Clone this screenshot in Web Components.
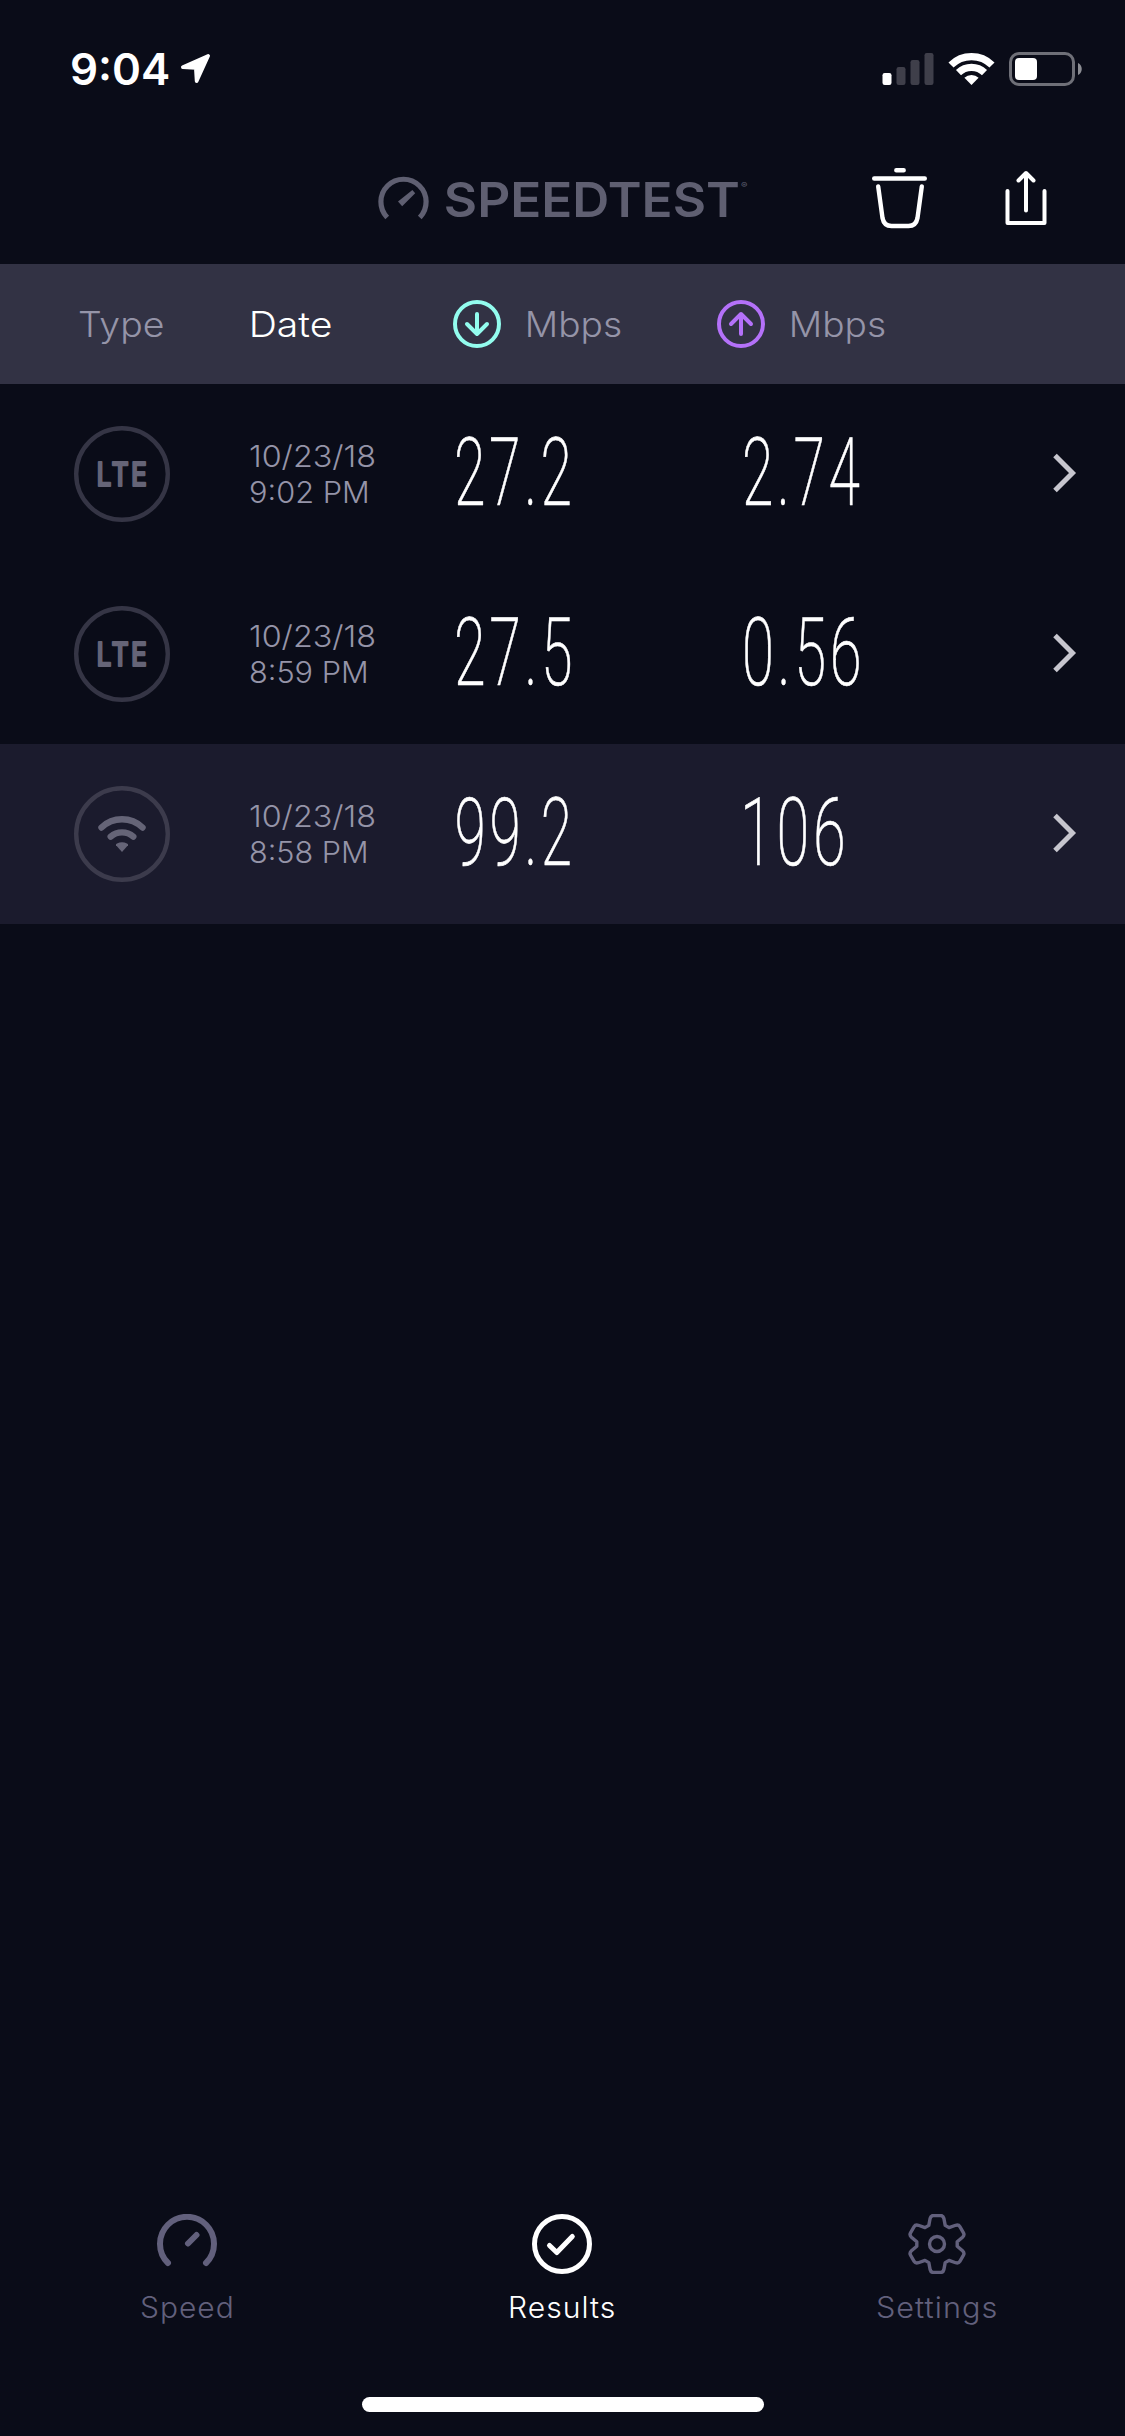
<!DOCTYPE html>
<html lang="en">
<head>
<meta charset="utf-8">
<title>Speedtest Results</title>
<style>
    html, body {
        margin: 0;
        background: #0a0c18;
    }
</style>
</head>
<body>
<results-app></results-app>

<script>
const define = (name, markup, setup) => {
    const template = document.createElement('template');
    template.innerHTML = markup;

    customElements.define(name, class extends HTMLElement {
        constructor() {
            super();
            this.attachShadow({mode: 'open'}).appendChild(template.content.cloneNode(true));
        }

        connectedCallback() {
            if (setup) setup(this, this.shadowRoot);
        }
    });
};

const ctx = document.createElement('canvas').getContext('2d');

// A single line of text whose visible ink is exactly `width` px wide.
// The box is `width` wide, so neighbours can be laid out against the ink.
define('fit-text', `
    <style>
        :host { display: block; flex: none; white-space: nowrap; }
        span { display: inline-block; transform-origin: 0 50%; }
    </style>
    <span><slot></slot></span>
`, (host, root) => {
    const width = Number(host.getAttribute('width'));
    const style = getComputedStyle(host);
    ctx.font = `${style.fontWeight} ${style.fontSize} ${style.fontFamily}`;
    ctx.letterSpacing = style.letterSpacing === 'normal' ? '0px' : style.letterSpacing;
    const ink = ctx.measureText(host.textContent);
    const scale = width / (ink.actualBoundingBoxLeft + ink.actualBoundingBoxRight);
    host.style.width = width + 'px';
    root.querySelector('span').style.transform =
        `translateX(${ink.actualBoundingBoxLeft * scale}px) scaleX(${scale})`;
});

define('status-bar', `
    <style>
        :host {
            display: flex;
            box-sizing: border-box;
            height: 132px;
            padding: 48px 42px 0 72px;
            color: #fff;
        }
        fit-text { font: 600 44px/42px Inter, sans-serif; margin-right: 11px; }
        svg { display: block; flex: none; height: 42px; }
        .signal { margin-left: auto; margin-right: 14px; }
        .wifi { margin-right: 14px; }
    </style>
    <fit-text width="97">9:04</fit-text>
    <svg width="32" viewBox="0 0 32 42">
        <path d="M28.2 7.8 2.8 19.2 15.8 20 16.6 33.2Z" fill="#fff" stroke="#fff" stroke-width="3.6" stroke-linejoin="round"/>
    </svg>
    <svg class="signal" width="52" viewBox="0 0 52 42">
        <rect x="0.5" y="25" width="9" height="12" rx="2.2" fill="#fff"/>
        <g fill="#3f3f4a">
            <rect x="14.5" y="19" width="9" height="18" rx="2.2"/>
            <rect x="28.5" y="12" width="9" height="25" rx="2.2"/>
            <rect x="42.5" y="5" width="9" height="32" rx="2.2"/>
        </g>
    </svg>
    <svg class="wifi" width="47" viewBox="0 0 47 42">
        <g fill="none" stroke="#fff" stroke-width="7.2">
            <path d="M3 17A29.2 29.2 0 0 1 44 17"/>
            <path d="M10.5 24.6A18.6 18.6 0 0 1 36.5 24.6"/>
        </g>
        <path d="M16.4 29.8A10.5 10.5 0 0 1 30.6 29.8L23.5 37Z" fill="#fff"/>
    </svg>
    <svg width="74" viewBox="0 0 74 42">
        <rect x="1.5" y="5.5" width="63" height="31" rx="8.5" fill="none" stroke="#6f7078" stroke-width="3"/>
        <rect x="6" y="10" width="22" height="22" rx="4" fill="#fff"/>
        <path d="M69 15C74 17 74 25 69 27Z" fill="#8c8d93"/>
    </svg>
`);

define('title-bar', `
    <style>
        :host {
            display: flex;
            box-sizing: border-box;
            height: 132px;
            padding: 33px 78px 0 378px;
            color: #5f5f71;
        }
        svg { display: block; flex: none; fill: none; stroke-linecap: round; stroke-linejoin: round; }
        fit-text { font: 600 48px/69px Inter, sans-serif; }
        .name { margin-left: 17px; }
        .mark { margin-left: 3px; font: 500 8px/40px Inter, sans-serif; }
        .trash { margin-left: auto; margin-right: 76px; }
        .trash, .share { stroke: #fff; }
    </style>
    <svg width="51" height="60" viewBox="0 0 51 60">
        <path d="M9.2 52.5A22.6 22.6 0 1 1 41.8 52.5" stroke="currentColor" stroke-width="5.2" stroke-linecap="butt"/>
        <path d="M34.4 25 37.2 28.2 24.2 41.2 20 36.6Z" fill="currentColor"/>
    </svg>
    <fit-text class="name" width="292">SPEEDTEST</fit-text>
    <fit-text class="mark" width="6">®</fit-text>
    <svg class="trash" width="58" height="66" viewBox="0 0 58 66" stroke-width="4.4">
        <path d="M25.3 5.2H32.7M3.2 13.5H53.8"/>
        <path d="M7.2 21.5 11.5 53Q13 61 20.5 61H37.5Q45 61 46.5 53L50.8 21.5"/>
    </svg>
    <svg class="share" width="42" height="66" viewBox="0 0 42 66" stroke-width="4">
        <path d="M2.5 26V58H39.5V26M21 45.5V8.5M13.5 15.5 21 8 28.5 15.5"/>
    </svg>
`);

define('speed-heading', `
    <style>
        :host { display: flex; align-items: center; gap: 27px; }
        :host([dir-up]) { --tint: #b471f9; }
        svg { display: block; fill: none; stroke: var(--tint, #93fcee); stroke-width: 4; stroke-linecap: round; stroke-linejoin: round; }
        :host([dir-up]) .arrow { transform: rotate(180deg); transform-origin: 24px 24px; }
    </style>
    <svg width="48" height="48">
        <circle cx="24" cy="24" r="22"/>
        <path class="arrow" d="M24 14V34M14 24 24 34 34 24"/>
    </svg>
    <slot></slot>
`);

define('list-header', `
    <style>
        :host {
            display: grid;
            grid-template-columns: 172px 202px 264px 1fr;
            align-items: center;
            height: 120px;
            padding-left: 79px;
            background: #323244;
            color: #9594a8;
            font: 300 35px/48px Inter, sans-serif;
        }
        .sorted { color: #fff; margin-left: 1px; }
    </style>
    <fit-text width="84">Type</fit-text>
    <fit-text class="sorted" width="79">Date</fit-text>
    <speed-heading><fit-text width="93">Mbps</fit-text></speed-heading>
    <speed-heading dir-up><fit-text width="93">Mbps</fit-text></speed-heading>
`);

define('type-badge', `
    <style>
        :host { display: block; }
        svg { display: block; fill: none; }
        text {
            font: 500 33px Inter, sans-serif;
            letter-spacing: 3px;
            fill: #656477;
            stroke: #656477;
            stroke-width: 2;
            stroke-linejoin: round;
        }
        .wifi { display: none; }
        :host([kind="wifi"]) .wifi { display: block; }
        :host([kind="wifi"]) text { display: none; }
    </style>
    <svg width="96" height="96" viewBox="0 0 96 96">
        <circle cx="48" cy="48" r="45.8" stroke="var(--ring, #353545)" stroke-width="4.4"/>
        <text x="22.5" y="60" textLength="53" lengthAdjust="spacingAndGlyphs">LTE</text>
        <g class="wifi">
            <path d="M27.5 41.5A29.7 29.7 0 0 1 68.5 41.5M36.7 50.7A17 17 0 0 1 59.3 50.7" stroke="#656477" stroke-width="6.4" stroke-linecap="round"/>
            <path d="M42 59.2Q41.5 58.3 43 57.5Q48 55 53 57.5Q54.5 58.3 54 59.2L48 66Z" fill="#656477"/>
        </g>
    </svg>
`);

define('result-row', `
    <style>
        :host {
            display: grid;
            grid-template-columns: 176.5px 207px 288px 1fr auto;
            align-items: center;
            box-sizing: border-box;
            height: 180px;
            padding: 0 47px 0 73.5px;
        }
        :host([highlight]) { background: #1b1b2d; --ring: #3c3b4c; }
        .when { color: #9594a8; font: 300 29.5px/36px Inter, sans-serif; }
        .speed {
            padding-bottom: 2px;
            color: #fff;
            font: 200 95px/96px Roboto, sans-serif;
            letter-spacing: 6px;
            -webkit-text-stroke: 0.6px #fff;
        }
        svg { display: block; margin-bottom: 3px; fill: none; stroke: #c7c6ce; stroke-width: 5; }
    </style>
    <type-badge></type-badge>
    <div class="when"></div>
    <div class="speed down"></div>
    <div class="speed up"></div>
    <svg width="26" height="40"><path d="M3 2.5 20.5 20 3 37.5"/></svg>
`, (host, root) => {
    const fit = (text, width) => `<fit-text width="${width}">${text}</fit-text>`;
    const [dateW, timeW, downW, upW] = host.getAttribute('widths').split(' ');
    root.querySelector('type-badge').setAttribute('kind', host.getAttribute('kind'));
    root.querySelector('.when').innerHTML =
        fit(host.getAttribute('date'), dateW) + fit(host.getAttribute('time'), timeW);
    root.querySelector('.down').innerHTML = fit(host.getAttribute('down'), downW);
    root.querySelector('.up').innerHTML = fit(host.getAttribute('up'), upW);
});

define('tab-item', `
    <style>
        :host {
            display: flex;
            flex: 1;
            flex-direction: column;
            align-items: center;
            gap: 14px;
            color: #62607c;
            font: 300 29.5px/38px Inter, sans-serif;
            letter-spacing: 1px;
        }
        :host([active]) { color: #fff; }
    </style>
    <slot name="icon"></slot>
    <slot></slot>
`);

// One gear tooth, repeated at 60 degree steps around the hub.
const gearPath = () => {
    const tooth = [[-8.2, -18.6], [-6.9, -25.5], [-6.2, -28.5], [-3.6, -28.5], [3.6, -28.5], [6.2, -28.5], [6.9, -25.5], [8.2, -18.6]];
    let d = '';
    for (let i = 0; i < 6; i++) {
        const a = i * Math.PI / 3;
        const p = tooth.map(([x, y]) =>
            (30 + x * Math.cos(a) - y * Math.sin(a)).toFixed(2) + ' ' + (30 + x * Math.sin(a) + y * Math.cos(a)).toFixed(2));
        d += `${i ? 'L' : 'M'}${p[0]}L${p[1]}Q${p[2]} ${p[3]}L${p[4]}Q${p[5]} ${p[6]}L${p[7]}`;
    }
    return d + 'Z';
};

define('tab-bar', `
    <style>
        :host { display: flex; box-sizing: border-box; height: 183px; margin: 0 1px 0 -1px; }
        svg { display: block; fill: none; stroke: currentColor; stroke-linecap: round; stroke-linejoin: round; }
    </style>
    <tab-item>
        <svg slot="icon" width="60" height="60" stroke-width="6">
            <path d="M11 49A27 27 0 1 1 49 49M31 29.5 39.5 21"/>
        </svg>
        <fit-text width="91">Speed</fit-text>
    </tab-item>
    <tab-item active>
        <svg slot="icon" width="60" height="60" stroke-width="5">
            <circle cx="30" cy="30" r="27.5"/>
            <path d="M17.5 31.5 24.8 38.5 40.3 22.5"/>
        </svg>
        <fit-text width="104">Results</fit-text>
    </tab-item>
    <tab-item>
        <svg slot="icon" width="60" height="60" stroke-width="3.4">
            <path d="${gearPath()}"/>
            <circle cx="30" cy="30" r="7.5"/>
        </svg>
        <fit-text width="119">Settings</fit-text>
    </tab-item>
`);

define('results-app', `
    <style>
        :host {
            display: flex;
            flex-direction: column;
            width: 1125px;
            height: 2436px;
            overflow: hidden;
            background: #0a0c18;
            font-family: Inter, sans-serif;
        }
        main { flex: 1; }
        .home { width: 402px; height: 15px; margin: 0 auto 24px; border-radius: 8px; background: #fff; }
    </style>
    <status-bar></status-bar>
    <title-bar></title-bar>
    <list-header></list-header>
    <main>
        <result-row kind="lte" date="10/23/18" time="9:02 PM" down="27.2" up="2.74" widths="125 117 112.5 114"></result-row>
        <result-row kind="lte" date="10/23/18" time="8:59 PM" down="27.5" up="0.56" widths="125 116 113 114"></result-row>
        <result-row kind="wifi" date="10/23/18" time="8:58 PM" down="99.2" up="106" widths="125 116 112.5 98" highlight></result-row>
    </main>
    <tab-bar></tab-bar>
    <div class="home"></div>
`);
</script>
</body>
</html>
